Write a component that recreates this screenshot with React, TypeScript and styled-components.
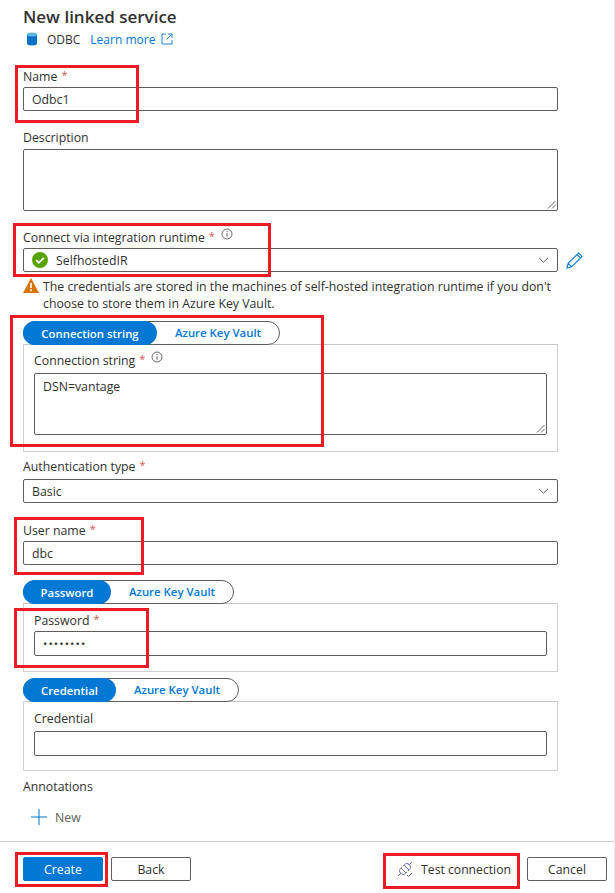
import { createGlobalStyle, styled } from "styled-components";
import { ReactNode } from "react";

const GlobalStyle = createGlobalStyle`
  html, body {
    margin: 0;
    padding: 0;
    background: #ffffff;
  }
  body {
    font-family: "Open Sans", "Noto Sans", "Liberation Sans", sans-serif;
    color: #323130;
    font-size: 13px;
  }
`;

const Panel = styled.div`
  position: relative;
  width: 615px;
  height: 893px;
  box-sizing: border-box;
  border-right: 1px solid #edebe9;
  overflow: hidden;
  display: flex;
  flex-direction: column;
`;

const Body = styled.div`
  flex: 1;
  min-height: 0;
  padding: 6px 56px 0 23px;
  display: flex;
  flex-direction: column;
`;

const Title = styled.h1`
  margin: 0;
  font-size: 17px;
  line-height: 22px;
  font-weight: 600;
  color: #323130;
`;

const SubHeader = styled.div`
  display: flex;
  align-items: center;
  height: 20px;
  margin: 1px 0 0 3px;
  font-size: 12px;
`;

const ConnectorName = styled.span`
  margin-left: 9px;
`;

const LearnMore = styled.a`
  display: inline-flex;
  align-items: center;
  gap: 6px;
  margin-left: 10px;
  color: #0078d4;
`;

const Field = styled.div<{ $top: number }>`
  margin-top: ${(p) => p.$top}px;
`;

const Label = styled.div`
  display: flex;
  align-items: flex-start;
  height: 17px;
  font-size: 12.3px;
  line-height: 17px;
  font-weight: 500;
  color: #323130;
`;

const Star = styled.span`
  color: #d9534f;
  margin-left: 4px;
  font-weight: 400;
  font-size: 11px;
  line-height: 14px;
`;

const Info = styled.span`
  display: inline-flex;
  margin-left: 6px;
  margin-top: -1px;
`;

const Input = styled.div<{ $h?: number; $gap?: number }>`
  box-sizing: border-box;
  height: ${(p) => p.$h ?? 24}px;
  margin-top: ${(p) => p.$gap ?? 2}px;
  border: 1px solid #605e5c;
  border-radius: 2px;
  padding: 0 8px;
  display: flex;
  align-items: center;
  font-size: 12.3px;
  color: #323130;
`;

const TextArea = styled(Input)`
  position: relative;
  align-items: flex-start;
  padding-top: 4px;
`;

const Dots = styled.span`
  font-size: 11.5px;
  letter-spacing: 1.1px;
`;

const Resize = styled.svg`
  position: absolute;
  right: 1px;
  bottom: 1px;
`;

const SelectValue = styled.span`
  flex: 1;
  display: flex;
  align-items: center;
  gap: 8px;
`;

const SelectRow = styled.div`
  display: flex;
  align-items: center;
`;

const SelectGrow = styled.div`
  flex: 1;
`;

const EditIcon = styled.svg`
  flex: none;
  margin: 3px -26px 0 7px;
`;

const Warning = styled.div`
  display: flex;
  gap: 4px;
  margin-top: 6px;
  width: 540px;
  font-size: 12.3px;
  line-height: 17px;
  color: #323130;
`;

const WarningText = styled.div`
  white-space: nowrap;
`;

const Toggle = styled.div`
  box-sizing: border-box;
  display: inline-flex;
  align-self: flex-start;
  height: 24px;
  border: 1px solid #605e5c;
  border-radius: 12px;
  position: relative;
  z-index: 1;
  font-size: 11.4px;
  font-weight: 600;
  background: #fff;
`;

const ToggleOption = styled.div<{ $active?: boolean; $w: number }>`
  width: ${(p) => p.$w}px;
  margin: -1px ${(p) => (p.$active ? "0 -1px -1px" : "0 0 0")};
  display: flex;
  align-items: center;
  justify-content: center;
  border-radius: 12px;
  background: ${(p) => (p.$active ? "#0078d4" : "transparent")};
  color: ${(p) => (p.$active ? "#ffffff" : "#0078d4")};
`;

const SwitchBlock = styled.div<{ $top: number }>`
  display: flex;
  flex-direction: column;
  margin-top: ${(p) => p.$top}px;
`;

const SwitchBox = styled.div<{ $h: number; $pad?: number }>`
  box-sizing: border-box;
  height: ${(p) => p.$h}px;
  border: 1px solid #d2d0ce;
  border-top-color: #c8c6c4;
  margin-top: -1px;
  padding: ${(p) => p.$pad ?? 8}px 10px 0;
`;

const Annotations = styled.div`
  margin-top: 7px;
`;

const NewRow = styled.div`
  display: flex;
  align-items: center;
  gap: 8px;
  height: 24px;
  margin: 10px 0 0 8px;
  font-size: 12.3px;
  color: #605e5c;
`;

const Footer = styled.div`
  height: 52px;
  box-sizing: border-box;
  border-top: 1px solid #d2d0ce;
  padding: 15px 7px 0 23px;
  display: flex;
  align-items: flex-start;
  gap: 8px;
`;

const Button = styled.div<{ $primary?: boolean }>`
  box-sizing: border-box;
  width: 80px;
  height: 24px;
  border-radius: 2px;
  border: 1px solid ${(p) => (p.$primary ? "#0078d4" : "#605e5c")};
  background: ${(p) => (p.$primary ? "#0078d4" : "#ffffff")};
  color: ${(p) => (p.$primary ? "#ffffff" : "#323130")};
  display: flex;
  align-items: center;
  justify-content: center;
  font-size: 12.3px;
`;

const TestButton = styled.div`
  display: flex;
  align-items: center;
  gap: 7px;
  height: 24px;
  margin-left: auto;
  margin-right: 8px;
  font-size: 12.2px;
`;

const Callout = styled.div<{ $x: number; $y: number; $w: number; $h: number }>`
  position: absolute;
  left: ${(p) => p.$x}px;
  top: ${(p) => p.$y}px;
  width: ${(p) => p.$w}px;
  height: ${(p) => p.$h}px;
  box-sizing: border-box;
  border: 3px solid #ed1c24;
  pointer-events: none;
  z-index: 2;
`;

const InfoIcon = () => (
  <Info>
    <svg width="12" height="12" viewBox="0 0 12 12" fill="none">
      <circle cx="6" cy="6" r="5" stroke="#605e5c" strokeWidth="0.9" />
      <path d="M6 5.2v3.4" stroke="#605e5c" strokeWidth="1" />
      <circle cx="6" cy="3.6" r="0.6" fill="#605e5c" />
    </svg>
  </Info>
);

const Chevron = () => (
  <svg width="11" height="6" viewBox="0 0 11 6" fill="none">
    <path d="M1 .8l4.5 4.4L10 .8" stroke="#605e5c" strokeWidth="1" />
  </svg>
);

const ResizeGrip = () => (
  <Resize width="9" height="9" viewBox="0 0 9 9">
    <path d="M8.5 1L1 8.5M8.5 5L5 8.5" stroke="#605e5c" strokeWidth="1" />
  </Resize>
);

const FieldLabel = ({ children, required, info }: { children: ReactNode; required?: boolean; info?: boolean }) => (
  <Label>
    {children}
    {required && <Star>*</Star>}
    {info && <InfoIcon />}
  </Label>
);

export default function App() {
  return (
    <Panel>
      <GlobalStyle />
      <Body>
        <Title>New linked service</Title>
        <SubHeader>
          <svg width="12" height="14" viewBox="0 0 12 14">
            <path d="M1 2.5v9C1 12.6 3.2 13.5 6 13.5s5-.9 5-2v-9z" fill="#0072c6" />
            <ellipse cx="6" cy="2.5" rx="5" ry="2" fill="#5fb4e8" />
          </svg>
          <ConnectorName>ODBC</ConnectorName>
          <LearnMore>
            Learn more
            <svg width="12" height="12" viewBox="0 0 12 12" fill="none">
              <path d="M5 1H1v10h10V7M7 1h4v4M11 1L5.5 6.5" stroke="#0078d4" strokeWidth="0.9" />
            </svg>
          </LearnMore>
        </SubHeader>

        <Field $top={19}>
          <FieldLabel required>Name</FieldLabel>
          <Input>Odbc1</Input>
        </Field>
        <Field $top={18}>
          <FieldLabel>Description</FieldLabel>
          <TextArea $h={62} $gap={3}>
            <ResizeGrip />
          </TextArea>
        </Field>
        <Field $top={18}>
          <FieldLabel required info>Connect via integration runtime</FieldLabel>
          <SelectRow>
            <SelectGrow>
              <Input>
                <SelectValue>
                  <svg width="16" height="16" viewBox="0 0 16 16">
                    <circle cx="8" cy="8" r="8" fill="#57a300" />
                    <path d="M4.2 8.2l2.6 2.6 5-5" stroke="#fff" strokeWidth="1.8" fill="none" />
                  </svg>
                  SelfhostedIR
                </SelectValue>
                <Chevron />
              </Input>
            </SelectGrow>
            <EditIcon width="19" height="19" viewBox="0 0 19 19" fill="none">
              <path d="M2 17l1.2-4.6L13.6 2l3.4 3.4L6.6 15.8zM3.2 12.4l3.4 3.4M12 3.6l3.4 3.4" stroke="#0078d4" strokeWidth="1.1" />
            </EditIcon>
          </SelectRow>
          <Warning>
            <svg width="16" height="15" viewBox="0 0 16 15" style={{ flex: "none" }}>
              <path d="M8 0l8 15H0z" fill="#d9730d" />
              <path d="M8 5v5" stroke="#fff" strokeWidth="1.6" />
              <circle cx="8" cy="12.2" r="1" fill="#fff" />
            </svg>
            <WarningText>
              The credentials are stored in the machines of self-hosted integration runtime if you don't
              <br />
              choose to store them in Azure Key Vault.
            </WarningText>
          </Warning>
        </Field>

        <SwitchBlock $top={9}>
          <Toggle>
            <ToggleOption $active $w={134}>Connection string</ToggleOption>
            <ToggleOption $w={122}>Azure Key Vault</ToggleOption>
          </Toggle>
          <SwitchBox $h={108} $pad={7}>
            <FieldLabel required info>Connection string</FieldLabel>
            <TextArea $h={62} $gap={4}>
              DSN=vantage
              <ResizeGrip />
            </TextArea>
          </SwitchBox>
        </SwitchBlock>

        <Field $top={6}>
          <FieldLabel required>Authentication type</FieldLabel>
          <Input $gap={4}>
            <SelectValue>Basic</SelectValue>
            <Chevron />
          </Input>
        </Field>
        <Field $top={19}>
          <FieldLabel required>User name</FieldLabel>
          <Input>dbc</Input>
        </Field>

        <SwitchBlock $top={15}>
          <Toggle>
            <ToggleOption $active $w={88}>Password</ToggleOption>
            <ToggleOption $w={122}>Azure Key Vault</ToggleOption>
          </Toggle>
          <SwitchBox $h={69}>
            <FieldLabel required>Password</FieldLabel>
            <Input $h={25}><Dots>••••••••</Dots></Input>
          </SwitchBox>
        </SwitchBlock>

        <SwitchBlock $top={6}>
          <Toggle>
            <ToggleOption $active $w={93}>Credential</ToggleOption>
            <ToggleOption $w={122}>Azure Key Vault</ToggleOption>
          </Toggle>
          <SwitchBox $h={70}>
            <FieldLabel>Credential</FieldLabel>
            <Input $h={25} $gap={4}></Input>
          </SwitchBox>
        </SwitchBlock>

        <Annotations>
          <FieldLabel>Annotations</FieldLabel>
          <NewRow>
            <svg width="16" height="16" viewBox="0 0 16 16">
              <path d="M8 0v16M0 8h16" stroke="#0078d4" strokeWidth="1" />
            </svg>
            New
          </NewRow>
        </Annotations>
      </Body>
      <Footer>
        <Button $primary>Create</Button>
        <Button>Back</Button>
        <TestButton>
          <svg width="18" height="18" viewBox="0 0 18 18" fill="none">
            <path d="M2 16l3-3M16 2l-3 3M5 8l5 5M8 5l5 5M6 7l-1.5 1.5a3 3 0 0 0 0 4.5l.5.5a3 3 0 0 0 4.5 0L11 12M7 6l1.5-1.5a3 3 0 0 1 4.5 0l.5.5a3 3 0 0 1 0 4.5L12 11" stroke="#6b76c9" strokeWidth="1" />
            <path d="M11 15l1.5 1.5L16 13" stroke="#605e5c" strokeWidth="1" />
          </svg>
          Test connection
        </TestButton>
        <Button>Cancel</Button>
      </Footer>

      <Callout $x={15} $y={65} $w={124} $h={58} />
      <Callout $x={13} $y={223} $w={258} $h={54} />
      <Callout $x={10} $y={315} $w={314} $h={132} />
      <Callout $x={14} $y={517} $w={130} $h={58} />
      <Callout $x={14} $y={608} $w={135} $h={60} />
      <Callout $x={15} $y={852} $w={93} $h={35} />
      <Callout $x={383} $y={853} $w={137} $h={36} />
    </Panel>
  );
}
